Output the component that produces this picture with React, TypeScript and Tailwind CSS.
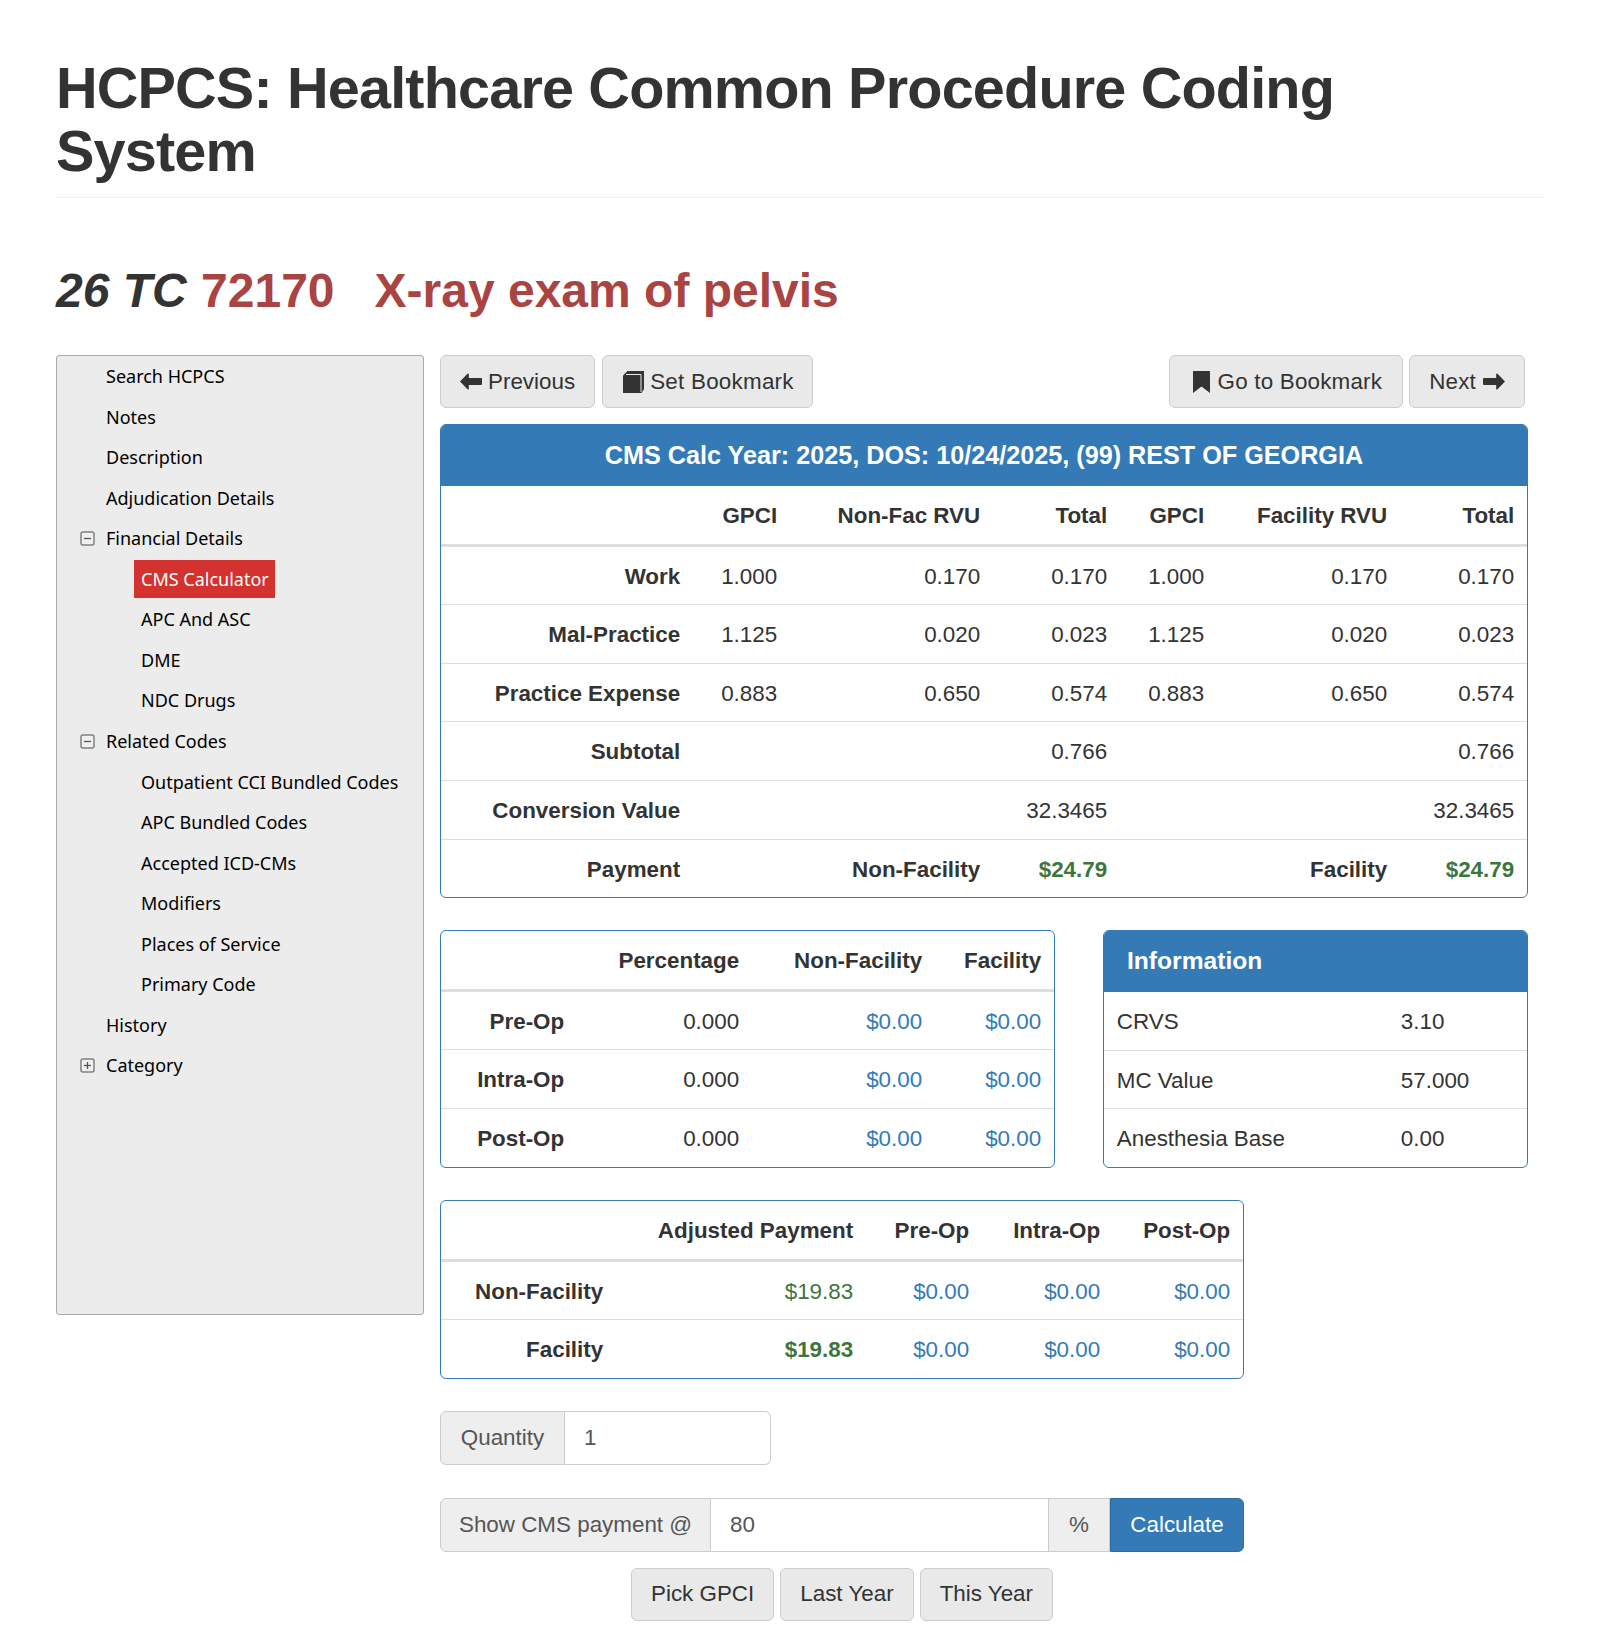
const SANS = "font-['Liberation_Sans',Arial,sans-serif]";

const TREE = [
  { label: "Search HCPCS", level: 0 },
  { label: "Notes", level: 0 },
  { label: "Description", level: 0 },
  { label: "Adjudication Details", level: 0 },
  { label: "Financial Details", level: 0, toggle: "minus" },
  { label: "CMS Calculator", level: 1, active: true },
  { label: "APC And ASC", level: 1 },
  { label: "DME", level: 1 },
  { label: "NDC Drugs", level: 1 },
  { label: "Related Codes", level: 0, toggle: "minus" },
  { label: "Outpatient CCI Bundled Codes", level: 1 },
  { label: "APC Bundled Codes", level: 1 },
  { label: "Accepted ICD-CMs", level: 1 },
  { label: "Modifiers", level: 1 },
  { label: "Places of Service", level: 1 },
  { label: "Primary Code", level: 1 },
  { label: "History", level: 0 },
  { label: "Category", level: 0, toggle: "plus" },
];

function ArrowLeft() {
  return (
    <svg viewBox="0 0 22 17" className="w-[22px] h-[17px] fill-[#333]">
      <path d="M0 8.500 L7.500 0.700 Q8.500 0 8.800 1 V5 H21 Q22 5 22 6 V11 Q22 12 21 12 H8.800 V16 Q8.500 17 7.500 16.300 Z" />
    </svg>
  );
}

function ArrowRight() {
  return (
    <svg viewBox="0 0 22 17" className="w-[22px] h-[17px] fill-[#333]">
      <path d="M22 8.500 L14.500 0.700 Q13.500 0 13.200 1 V5 H1 Q0 5 0 6 V11 Q0 12 1 12 H13.200 V16 Q13.500 17 14.500 16.300 Z" />
    </svg>
  );
}

function BookIcon() {
  return (
    <svg viewBox="0 0 21 22" className="w-[21px] h-[22px] ml-px">
      <path d="M0 22 V4.500 L4.500 0 H21 V18 L18.500 22 Z" fill="#333" />
      <path d="M3 3.500 H18 V21" fill="none" stroke="#e9e9e9" strokeWidth="1" />
    </svg>
  );
}

function BookmarkIcon() {
  return (
    <svg viewBox="0 0 17 22" className="w-[17px] h-[22px] ml-[4px] mr-[2px] fill-[#333]">
      <path d="M0.500 0 H16.500 Q17 0 17 0.500 V22 L8.500 15.500 L0 22 V0.500 Q0 0 0.500 0 Z" />
    </svg>
  );
}

function TreeToggle({ kind }: { kind: string }) {
  return (
    <svg viewBox="0 0 15 15" className="w-[15px] h-[15px] absolute left-[23px] top-[12.500px]">
      <rect x="1" y="1" width="13" height="13" rx="2" fill="#f0f0f0" stroke="#808080" strokeWidth="1.500" />
      <path d="M4 7.500 H11" stroke="#555" strokeWidth="1.300" />
      {kind === "plus" && <path d="M7.500 4 V11" stroke="#555" strokeWidth="1.300" />}
    </svg>
  );
}

function Sidebar() {
  return (
    <div className="w-[368px] h-[960px] shrink-0 bg-[#ececec] border border-[#aaa] rounded-[3px] pt-[0.600px] relative">
      {TREE.map((item) => (
        <div key={item.label} className={`relative h-[40.520px] flex items-center text-black text-[18px] font-['Noto_Sans',sans-serif] ${item.level === 1 ? "pl-[84px]" : "pl-[49px]"}`}>
          {item.toggle && <TreeToggle kind={item.toggle} />}
          {item.active ? (
            <span className="bg-[#d3322e] text-white h-[38px] leading-[38px] pl-[7px] pr-[6px] -ml-[7px] whitespace-nowrap">{item.label}</span>
          ) : (
            <span className="whitespace-nowrap">{item.label}</span>
          )}
        </div>
      ))}
    </div>
  );
}

function Btn({ children }: { children: React.ReactNode }) {
  return (
    <button className="h-[53px] px-[19px] bg-[#e9e9e9] border border-[#ccc] rounded-[6px] text-[#333] text-[22.400px] flex items-center gap-[6px] whitespace-nowrap">
      {children}
    </button>
  );
}

function PanelHeader({ title, center }: { title: string; center?: boolean }) {
  return (
    <div className={`h-[61px] bg-[#337ab7] text-white font-bold flex items-center ${center ? "justify-center text-[25.200px]" : "px-[23px] text-[24.600px]"}`}>
      {title}
    </div>
  );
}

type Align = "r" | "l";
type CellDef = { t: string; c?: string };

function DataTable({ widths, head, rows, align = "r" }: { widths: number[]; head?: string[]; rows: (string | CellDef)[][]; align?: Align }) {
  return (
    <table className="table-fixed border-collapse w-full text-[22.400px] leading-[32px] text-[#333]">
      <colgroup>
        {widths.map((w, i) => (
          <col key={i} style={{ width: w }} />
        ))}
      </colgroup>
      {head && (
        <thead>
          <tr className="border-b-[3px] border-[#ddd]">
            {head.map((h, i) => (
              <th key={i} className="px-[12.800px] pt-[14px] pb-[11.600px] text-right font-bold whitespace-nowrap">{h}</th>
            ))}
          </tr>
        </thead>
      )}
      <tbody>
        {rows.map((row, ri) => (
          <tr key={ri} className={ri > 0 ? "border-t border-[#ddd]" : ""}>
            {row.map((cell, ci) => {
              const def = typeof cell === "string" ? { t: cell } : cell;
              return (
                <td key={ci} className={`px-[12.800px] pt-[14px] pb-[11.600px] whitespace-nowrap ${align === "r" ? "text-right" : "text-left"} ${align === "r" && ci === 0 ? "font-bold" : ""} ${def.c ?? ""}`}>
                  {def.t}
                </td>
              );
            })}
          </tr>
        ))}
      </tbody>
    </table>
  );
}

const GREEN_BOLD = "text-[#3c763d] font-bold";
const BLUE = "text-[#337ab7]";
const zero = { t: "$0.00", c: BLUE };

export default function App() {
  return (
    <div className={`${SANS} bg-white pl-[56px] pr-[60px] pt-[57px] pb-[20px] text-[#333]`}>
      <h1 className="text-[57.600px] leading-[63px] font-bold tracking-[-0.830px] pb-[14px] border-b border-[#eee]">
        HCPCS: Healthcare Common Procedure Coding System
      </h1>
      <h2 className="mt-[66px] mb-[38px] text-[48px] leading-[53px] font-bold whitespace-pre">
        <i>26 TC</i> <span className="ml-px text-[#a94442]">72170   X-ray exam of pelvis</span>
      </h2>
      <div className="flex items-start">
        <Sidebar />
        <div className="ml-[16px] w-[1088px]">
          <div className="flex justify-between pr-[3px]">
            <div className="flex gap-[7px]">
              <Btn><ArrowLeft /> Previous</Btn>
              <Btn><BookIcon /> <span className="tracking-[0.250px] -mr-px">Set Bookmark</span></Btn>
            </div>
            <div className="flex gap-[6px]">
              <Btn><BookmarkIcon /> <span className="tracking-[0.200px] mr-px">Go to Bookmark</span></Btn>
              <Btn><span className="tracking-[0.200px] mr-px">Next</span> <ArrowRight /></Btn>
            </div>
          </div>

          <div className="mt-[16px] border border-[#337ab7] rounded-[6px] overflow-hidden">
            <PanelHeader title="CMS Calc Year: 2025, DOS: 10/24/2025, (99) REST OF GEORGIA" center />
            <DataTable
              widths={[252, 97, 203, 127, 97, 183, 127]}
              head={["", "GPCI", "Non-Fac RVU", "Total", "GPCI", "Facility RVU", "Total"]}
              rows={[
                ["Work", "1.000", "0.170", "0.170", "1.000", "0.170", "0.170"],
                ["Mal-Practice", "1.125", "0.020", "0.023", "1.125", "0.020", "0.023"],
                ["Practice Expense", "0.883", "0.650", "0.574", "0.883", "0.650", "0.574"],
                ["Subtotal", "", "", "0.766", "", "", "0.766"],
                ["Conversion Value", "", "", "32.3465", "", "", "32.3465"],
                ["Payment", "", { t: "Non-Facility", c: "font-bold" }, { t: "$24.79", c: GREEN_BOLD }, "", { t: "Facility", c: "font-bold" }, { t: "$24.79", c: GREEN_BOLD }],
              ]}
            />
          </div>

          <div className="mt-[32px] flex items-start justify-between">
            <div className="w-[615px] border border-[#337ab7] rounded-[6px] overflow-hidden">
              <DataTable
                widths={[136, 175, 183, 119]}
                head={["", "Percentage", "Non-Facility", "Facility"]}
                rows={[
                  ["Pre-Op", "0.000", zero, zero],
                  ["Intra-Op", "0.000", zero, zero],
                  ["Post-Op", "0.000", zero, zero],
                ]}
              />
            </div>
            <div className="w-[425px] border border-[#337ab7] rounded-[6px] overflow-hidden">
              <PanelHeader title="Information" />
              <DataTable
                widths={[284, 139]}
                align="l"
                rows={[
                  ["CRVS", "3.10"],
                  ["MC Value", "57.000"],
                  ["Anesthesia Base", "0.00"],
                ]}
              />
            </div>
          </div>

          <div className="mt-[32px] w-[804px] border border-[#337ab7] rounded-[6px] overflow-hidden">
            <DataTable
              widths={[175, 250, 116, 131, 130]}
              head={["", "Adjusted Payment", "Pre-Op", "Intra-Op", "Post-Op"]}
              rows={[
                ["Non-Facility", { t: "$19.83", c: "text-[#3c763d]" }, zero, zero, zero],
                ["Facility", { t: "$19.83", c: GREEN_BOLD }, zero, zero, zero],
              ]}
            />
          </div>

          <div className="mt-[32px] flex w-[331px] h-[54px] text-[22.400px]">
            <span className="w-[125px] shrink-0 bg-[#eee] border border-[#ccc] rounded-l-[6px] text-[#555] flex items-center justify-center">Quantity</span>
            <input readOnly value="1" className="min-w-0 flex-1 border border-l-0 border-[#ccc] rounded-r-[6px] px-[19px] text-[#555] outline-none" />
          </div>

          <div className="mt-[33px] flex w-[804px] h-[54px] text-[22.400px]">
            <span className="w-[271px] shrink-0 bg-[#eee] border border-[#ccc] rounded-l-[6px] text-[#555] flex items-center justify-center whitespace-nowrap">Show CMS payment @</span>
            <input readOnly value="80" className="min-w-0 flex-1 border-y border-[#ccc] px-[19px] text-[#555] outline-none" />
            <span className="w-[62px] shrink-0 bg-[#eee] border border-[#ccc] text-[#555] flex items-center justify-center">%</span>
            <button className="w-[134px] shrink-0 bg-[#337ab7] border border-[#2e6da4] rounded-r-[6px] text-white">Calculate</button>
          </div>

          <div className="mt-[16px] flex w-[804px] justify-center gap-[6px]">
            <Btn>Pick GPCI</Btn>
            <Btn>Last Year</Btn>
            <Btn>This Year</Btn>
          </div>
        </div>
      </div>
    </div>
  );
}
